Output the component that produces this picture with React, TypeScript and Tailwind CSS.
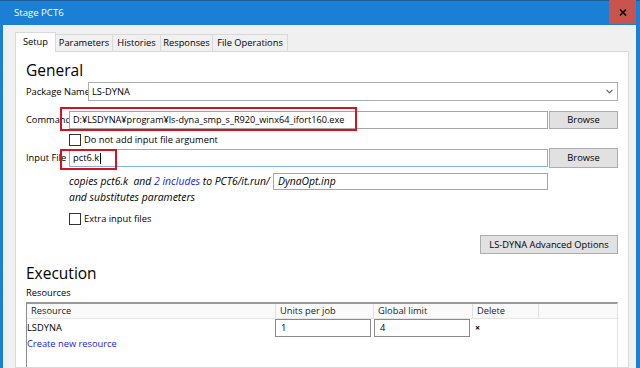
import React from 'react';

const Checkbox: React.FC = () => (
  <span className="w-[12px] h-[12px] shrink-0 border border-[#333333] bg-white" />
);

const Button: React.FC<{ label: string; className?: string }> = ({ label, className = '' }) => (
  <div className={`flex items-center justify-center bg-[#e1e1e1] border border-[#adadad] ${className}`}>
    {label}
  </div>
);

const tabs = [
  { name: 'Parameters', w: 'w-[57px]' },
  { name: 'Histories', w: 'w-[48px]' },
  { name: 'Responses', w: 'w-[52px]' },
  { name: 'File Operations', w: 'w-[75px]' },
];

export default function App() {
  return (
    <div className="w-[640px] h-[368px] overflow-hidden bg-[#1b7fd5] flex flex-col font-['Open_Sans','Noto_Sans',sans-serif] text-[9.3px] text-black">
      {/* title bar */}
      <div className="h-[25px] shrink-0 flex items-stretch border-t border-[#1a5f9c]">
        <span className="pl-[14px] self-center text-white text-[9.6px]">Stage PCT6</span>
        <div className="ml-auto mr-[4px] w-[27px] h-[24px] -mt-px bg-[#c9534d] flex items-center justify-center">
          <svg width="8" height="7" viewBox="0 0 8 7">
            <path d="M1 0.5 L7 6.5 M7 0.5 L1 6.5" stroke="#000" strokeWidth="1.7" />
          </svg>
        </div>
      </div>

      {/* window body */}
      <div className="flex-1 ml-[3px] mr-[4px] bg-[#f0f0f0] pl-[12px] pr-[7px] pt-[7px] flex flex-col">
        {/* tabs */}
        <div className="flex items-end">
          <div className="relative z-10 w-[41px] h-[20px] -mb-px bg-white border-x border-t border-[#d9d9d9] flex items-center justify-center pb-[1px]">
            Setup
          </div>
          {tabs.map((t) => (
            <div
              key={t.name}
              className={`${t.w} h-[17px] bg-[#f0f0f0] border-t border-r border-[#d9d9d9] flex items-center justify-center whitespace-nowrap`}
            >
              {t.name}
            </div>
          ))}
        </div>

        {/* tab panel */}
        <div className="relative flex-1 bg-white border border-[#d9d9d9] px-[10px] flex flex-col">
          <div className="mt-[8px] h-[21px] leading-[21px] text-[15.5px]">General</div>

          <div className="mt-[1px] h-[19px] flex items-center">
            <span className="w-[62px] whitespace-nowrap">Package Name</span>
            <div className="flex-1 h-[19px] border border-[#acacac] bg-white flex items-center pl-[3px] pr-[4px]">
              <span className="flex-1">LS-DYNA</span>
              <svg width="7" height="5" viewBox="0 0 7 5">
                <path d="M0.5 0.8 L3.5 3.8 L6.5 0.8" stroke="#555" strokeWidth="1.1" fill="none" />
              </svg>
            </div>
          </div>

          <div className="relative mt-[10px] h-[18px] flex items-center">
            <span className="w-[43px] whitespace-nowrap">Command</span>
            <div className="flex-1 h-[18px] border border-[#a5a5a5] bg-white flex items-center pl-[3px] whitespace-nowrap overflow-hidden text-[9.15px]">
              D:¥LSDYNA¥program¥ls-dyna_smp_s_R920_winx64_ifort160.exe
            </div>
            <Button label="Browse" className="ml-px w-[69px] h-[18px]" />
            <div className="absolute left-[34px] top-[-4px] w-[297px] h-[24px] border-2 border-[#d6121e]" />
          </div>

          <div className="mt-[5px] h-[12px] pl-[43px] flex items-center gap-[3px]">
            <Checkbox />
            <span>Do not add input file argument</span>
          </div>

          <div className="relative mt-[2px] h-[20px] flex items-center">
            <span className="w-[43px] whitespace-nowrap">Input File</span>
            <div className="flex-1 h-[18px] border border-[#7fb3e6] bg-white flex items-center pl-[3px]">
              pct6.k<span className="w-px h-[11px] bg-black ml-[1px]" />
            </div>
            <Button label="Browse" className="ml-px w-[69px] h-[20px]" />
            <div className="absolute left-[34px] top-[1px] w-[57px] h-[21px] border-2 border-[#d6121e]" />
          </div>

          <div className="mt-[5px] h-[17px] pl-[43px] pr-[70px] flex items-center italic text-[10.4px]">
            <span className="flex-1 whitespace-pre">
              copies pct6.k  and <span className="text-[#1a1ae0]">2 includes</span> to PCT6/it.run/
            </span>
            <div className="w-[275px] h-[17px] border border-[#a5a5a5] bg-white flex items-center pl-[4px]">
              DynaOpt.inp
            </div>
          </div>
          <div className="mt-[1px] h-[13px] leading-[13px] pl-[43px] italic text-[10.4px]">and substitutes parameters</div>

          <div className="mt-[9px] h-[12px] pl-[43px] flex items-center gap-[3px]">
            <Checkbox />
            <span>Extra input files</span>
          </div>

          <Button label="LS-DYNA Advanced Options" className="mt-[10px] self-end w-[138px] h-[19px]" />

          <div className="mt-[9px] h-[21px] leading-[21px] text-[15.5px]">Execution</div>
          <div className="mt-[2px] h-[13px] leading-[13px]">Resources</div>

          {/* resources table */}
          <div className="mt-[3px] flex-1 bg-white border-l border-l-[#8c8c8c] border-t-2 border-t-[#9a9a9a] border-r border-r-[#e3e3e3] flex flex-col">
            <div className="h-[15px] flex bg-[#fafafa] border-b border-[#e6e6e6] text-[#222]">
              <div className="w-[248px] pl-[4px] flex items-center">Resource</div>
              <div className="w-[98px] pl-[4px] flex items-center border-l border-[#e0e0e0]">Units per job</div>
              <div className="w-[99px] pl-[4px] flex items-center border-l border-[#e0e0e0]">Global limit</div>
              <div className="w-[66px] pl-[4px] flex items-center border-l border-[#e0e0e0]">Delete</div>
              <div className="flex-1 border-l border-[#e0e0e0]" />
            </div>
            <div className="h-[18px] flex items-center">
              <span className="w-[248px]">LSDYNA</span>
              <div className="w-[96px] h-[18px] border border-[#8a8a8a] flex items-center pl-[5px]">1</div>
              <div className="ml-[3px] w-[96px] h-[18px] border border-[#8a8a8a] flex items-center pl-[5px]">4</div>
              <span className="ml-[5px] text-[9px] font-bold">×</span>
            </div>
            <div className="h-[13px] leading-[13px] text-[#1a1ae0]">Create new resource</div>
          </div>
        </div>
      </div>
    </div>
  );
}
